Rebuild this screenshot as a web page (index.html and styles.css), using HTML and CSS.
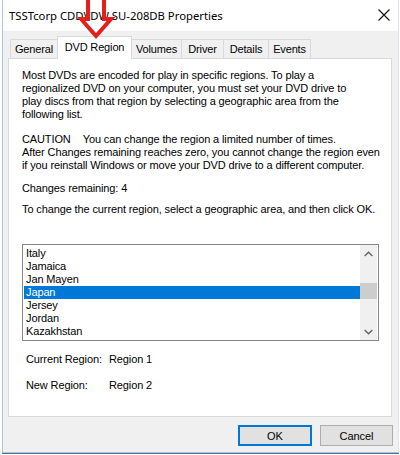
FILE: index.html
```html
<!DOCTYPE html>
<html>
<head>
<meta charset="utf-8">
<link rel="stylesheet" href="styles.css">
</head>
<body>
<div class="window">
  <div class="titlebar">
    <span class="title">TSSTcorp CDDVDW SU-208DB Properties</span>
    <svg class="close" width="12" height="12" viewBox="0 0 12 12"><path d="M0.5 0.5 L11.5 11.5 M11.5 0.5 L0.5 11.5" stroke="#111" stroke-width="1.1" fill="none"/></svg>
  </div>
  <div class="content">
    <div class="tabs">
      <div class="tab t-general">General</div>
      <div class="tab selected t-dvd">DVD Region</div>
      <div class="tab t-volumes">Volumes</div>
      <div class="tab t-driver">Driver</div>
      <div class="tab t-details">Details</div>
      <div class="tab t-events">Events</div>
    </div>
    <div class="panel">
      <p class="p1">Most DVDs are encoded for play in specific regions. To play a<br>regionalized DVD on your computer, you must set your DVD drive to<br>play discs from that region by selecting a geographic area from the<br>following list.</p>
      <p class="p2"><span class="caution">CAUTION</span>You can change the region a limited number of times.<br>After Changes remaining reaches zero, you cannot change the region even<br>if you reinstall Windows or move your DVD drive to a different computer.</p>
      <p class="p3">Changes remaining: 4</p>
      <p class="p4">To change the current region, select a geographic area, and then click OK.</p>
      <div class="listbox">
        <div class="items">
          <div class="item">Italy</div>
          <div class="item">Jamaica</div>
          <div class="item">Jan Mayen</div>
          <div class="item sel">Japan</div>
          <div class="item">Jersey</div>
          <div class="item">Jordan</div>
          <div class="item">Kazakhstan</div>
          <div class="item">Kenya</div>
        </div>
        <div class="scrollbar">
          <div class="sb-btn"><svg width="9" height="6" viewBox="0 0 9 6"><path d="M0.7 5 L4.5 1.2 L8.3 5" stroke="#606060" stroke-width="1.3" fill="none"/></svg></div>
          <div class="sb-track"><div class="thumb"></div></div>
          <div class="sb-btn"><svg width="9" height="6" viewBox="0 0 9 6"><path d="M0.7 1 L4.5 4.8 L8.3 1" stroke="#606060" stroke-width="1.3" fill="none"/></svg></div>
        </div>
      </div>
      <div class="region-row r1"><span class="rlabel">Current Region:</span><span>Region 1</span></div>
      <div class="region-row r2"><span class="rlabel">New Region:</span><span>Region 2</span></div>
    </div>
    <div class="buttons">
      <button class="btn default">OK</button>
      <button class="btn">Cancel</button>
    </div>
  </div>
  <svg class="arrow" width="40" height="42" viewBox="0 0 40 42"><path d="M10 -2 L10 19 L3 19 L18 36 L33 19 L26 19 L26 -2" stroke="#e3201b" stroke-width="4" fill="none" stroke-linejoin="miter"/></svg>
</div>
</body>
</html>
```
FILE: styles.css
```css
html, body {
  margin: 0;
  padding: 0;
  background: #ffffff;
}
body {
  width: 400px;
  height: 455px;
  overflow: hidden;
}
.window {
  position: relative;
  margin-left: 2px;
  width: 395px;
  height: 452px;
  border-left: 1px solid #a8c6e4;
  border-right: 1px solid #dde6ef;
  border-bottom: 1px solid #a8c6e4;
  box-shadow: 0 1px 0 #4d6f92;
  background: #f0f0f0;
  font-family: "Liberation Sans", Arial, sans-serif;
  font-size: 11px;
  letter-spacing: -0.12px;
  color: #000;
}
.titlebar {
  height: 31px;
  background: #ffffff;
  display: flex;
  align-items: center;
  justify-content: space-between;
  padding: 0 8px 0 6px;
}
.title {
  font-family: "Noto Sans", "Open Sans", sans-serif;
  font-size: 11.3px;
  letter-spacing: 0;
  color: #000;
  margin-top: -1px;
}
.close {
  display: block;
  margin-top: -1px;
}
.content {
  display: flex;
  flex-direction: column;
}
.tabs {
  display: flex;
  align-items: flex-end;
  height: 22px;
  margin-top: 5px;
  padding-left: 7px;
  position: relative;
  z-index: 2;
}
.tab {
  box-sizing: border-box;
  height: 19px;
  border: 1px solid #d9d9d9;
  border-bottom: none;
  background: #f0f0f0;
  display: flex;
  align-items: center;
  justify-content: center;
  margin-left: -1px;
  padding-bottom: 1px;
  letter-spacing: -0.15px;
}
.tab:first-child { margin-left: 0; }
.t-general { width: 48px; }
.t-dvd { width: 75px; }
.t-volumes { width: 51px; }
.t-driver { width: 43px; }
.t-details { width: 46px; }
.t-events { width: 43px; }
.tab.selected {
  height: 23px;
  background: #ffffff;
  margin-bottom: -1px;
  padding-bottom: 3px;
  position: relative;
  z-index: 2;
  margin-left: -1px;
  margin-right: -1px;
}
.tab.selected + .tab { margin-left: 0; }
.panel {
  box-sizing: border-box;
  margin-left: 5px;
  width: 384px;
  height: 359px;
  background: #ffffff;
  border: 1px solid #d9d9d9;
  padding: 10px 10px 0 13px;
  line-height: 13px;
}
.panel p {
  margin: 0;
  white-space: nowrap;
}
.p2 { margin-top: 12px !important; }
.p3 { margin-top: 10px !important; }
.p4 { margin-top: 8px !important; }
.caution { margin-right: 12px; }
.listbox {
  box-sizing: border-box;
  margin-top: 28px;
  width: 357px;
  height: 97px;
  border: 1px solid #828790;
  display: flex;
  overflow: hidden;
}
.items {
  flex: 1;
  padding-top: 2px;
  padding-left: 1px;
  overflow: hidden;
}
.item {
  height: 13px;
  line-height: 13px;
  padding-left: 2px;
  white-space: nowrap;
}
.item.sel {
  background: #0078d7;
  color: #ffffff;
}
.scrollbar {
  width: 17px;
  margin-right: 1px;
  background: #f0f0f0;
  display: flex;
  flex-direction: column;
}
.sb-btn {
  height: 17px;
  display: flex;
  align-items: center;
  justify-content: center;
}
.sb-btn svg { display: block; }
.sb-track {
  flex: 1;
  padding-top: 21px;
}
.thumb {
  height: 16px;
  background: #cdcdcd;
}
.region-row {
  display: flex;
  padding-left: 4px;
  height: 13px;
}
.r1 { margin-top: 12px; }
.r2 { margin-top: 13px; }
.rlabel { width: 83px; }
.buttons {
  display: flex;
  justify-content: flex-end;
  gap: 8px;
  margin-top: 8px;
  padding-right: 5px;
}
.btn {
  box-sizing: border-box;
  width: 73px;
  height: 21px;
  border: 1px solid #adadad;
  background: #e1e1e1;
  font-family: "Liberation Sans", Arial, sans-serif;
  font-size: 11px;
  letter-spacing: -0.05px;
  color: #000;
  padding: 0;
  margin: 0;
}
.btn.default {
  border: 1px solid #0078d7;
  box-shadow: inset 0 0 0 1px #0078d7;
  width: 74px;
}
.arrow {
  position: absolute;
  left: 75px;
  top: 0;
  z-index: 5;
}
```
